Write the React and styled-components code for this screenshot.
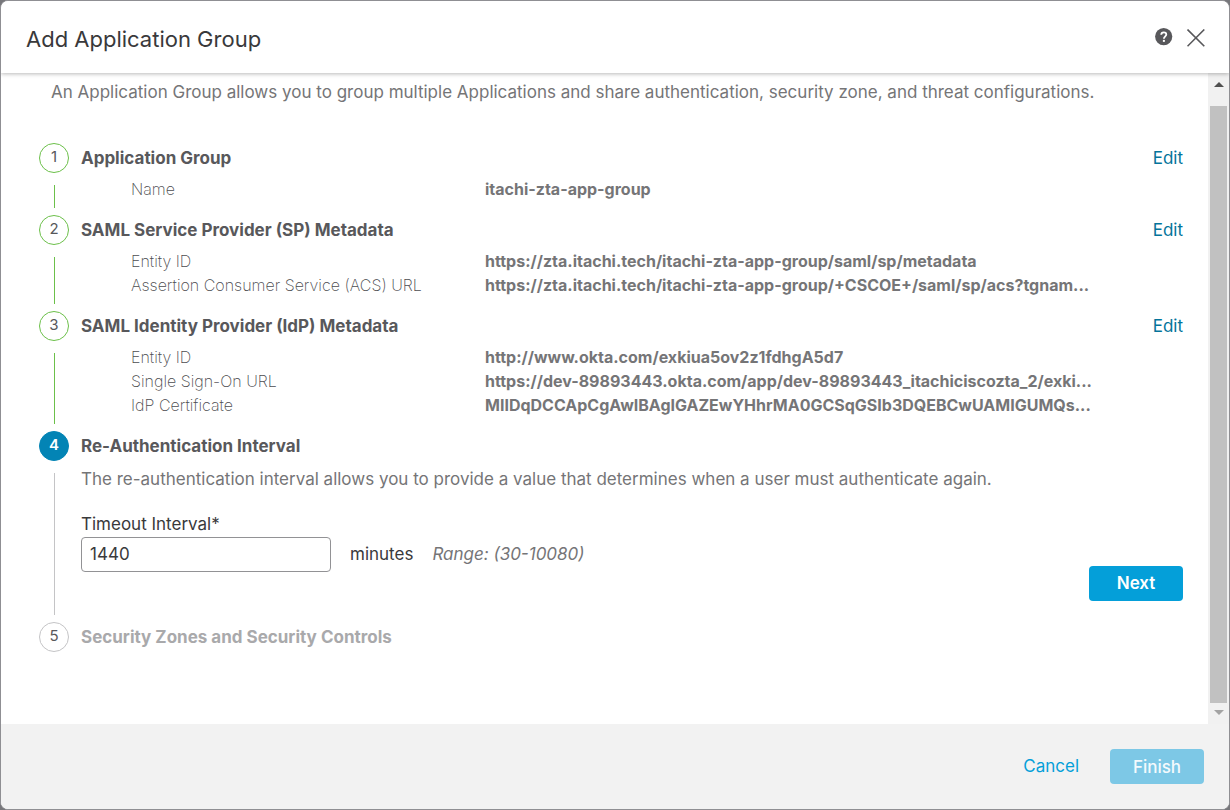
import React from "react";
import styled, { createGlobalStyle, css } from "styled-components";

const GlobalStyle = createGlobalStyle`
  *, *::before, *::after { box-sizing: border-box; }
  html { background: #77777b; }
  body {
    margin: 0;
    font-family: Inter, "Liberation Sans", sans-serif;
    font-size: 17px;
    line-height: 24px;
    color: #39393b;
  }
  h1, h2, p, dl, dt, dd, ol { margin: 0; padding: 0; }
  button, input { font: inherit; }
`;

const Dialog = styled.section`
  display: flex;
  flex-direction: column;
  min-height: 100vh;
  overflow: hidden;
  background: #fff;
  border: 1px solid #8f8f93;
  border-radius: 8px;
`;

const Header = styled.header`
  position: relative;
  display: flex;
  align-items: center;
  justify-content: space-between;
  height: 72px;
  padding: 2px 24px 0 25px;
  background: #fff;
  box-shadow: 0 1px 4px rgba(0, 0, 0, 0.28);
`;

const Title = styled.h1`
  padding-top: 2px;
  font-size: 22px;
  line-height: 28px;
  font-weight: 400;
`;

const HeaderActions = styled.div`
  display: flex;
  align-items: center;
  gap: 14px;
`;

const IconButton = styled.button`
  display: flex;
  padding: 0;
  border: 0;
  background: none;
  color: #58585b;
  cursor: pointer;
`;

const Body = styled.div`
  display: flex;
  flex: 1;
`;

const Content = styled.main`
  flex: 1;
  min-width: 0;
  padding: 7px 25px 0 38px;
`;

const Intro = styled.p`
  padding: 0 12px 39px;
  color: #757577;
`;

const Scrollbar = styled.div`
  display: flex;
  flex-direction: column;
  width: 21px;
  padding: 0 2px;
  background: #f1f1f1;
`;

const ScrollArrow = styled.div`
  display: flex;
  justify-content: center;
  height: ${(p) => (p.$down ? 21 : 33)}px;
  padding-top: ${(p) => (p.$down ? 7 : 9)}px;
`;

const ScrollThumb = styled.div`
  flex: 1;
  background: #c1c1c1;
`;

const Steps = styled.ol`
  list-style: none;
`;

const Step = styled.li`
  display: flex;
  gap: 12px;
`;

const Rail = styled.div`
  display: flex;
  flex-direction: column;
  align-items: center;
  flex: none;
  width: 30px;
`;

const tones = {
  done: css`
    border-color: #6cc04a;
    color: #58585b;
  `,
  active: css`
    border-color: #0384b5;
    background: #0384b5;
    color: #fff;
    font-weight: 600;
  `,
  pending: css`
    border-color: #c4c4c6;
    color: #58585b;
  `,
};

const Marker = styled.span`
  width: 30px;
  height: 30px;
  border: 1px solid;
  border-radius: 50%;
  font-size: 15px;
  line-height: 26px;
  text-align: center;
  ${(p) => tones[p.$tone]}
`;

const Connector = styled.span`
  flex: 1;
  width: 1px;
  margin: 12px 0 7px;
  background: ${(p) => (p.$tone === "done" ? "#6cc04a" : "#c4c4c6")};
`;

const StepContent = styled.div`
  flex: 1;
  min-width: 0;
`;

const StepHead = styled.div`
  display: flex;
  align-items: center;
  justify-content: space-between;
  height: 30px;
`;

const StepTitle = styled.h2`
  font-size: 17px;
  line-height: 24px;
  font-weight: 700;
  color: ${(p) => (p.$tone === "pending" ? "#a9a9ab" : "#58585b")};
`;

const EditLink = styled.a`
  color: #04749b;
  text-decoration: none;
`;

const Details = styled.dl`
  padding: 4px 0 14px 50px;
  font-size: 16px;
`;

const Detail = styled.div`
  display: grid;
  grid-template-columns: 354px minmax(0, 1fr);
`;

const DetailName = styled.dt`
  font-weight: 200;
  color: #4c4c4f;
`;

const DetailValue = styled.dd`
  overflow: hidden;
  font-weight: 700;
  color: #757577;
  white-space: nowrap;
  text-overflow: ellipsis;
`;

const Description = styled.p`
  padding: 6px 0 21px;
  color: #757577;
`;

const FieldLabel = styled.label`
  display: block;
  padding: 2px 0 3px;
  line-height: 20px;
`;

const FormRow = styled.div`
  display: flex;
  justify-content: space-between;
  min-height: 64px;
  margin-bottom: 21px;
`;

const Field = styled.div`
  display: flex;
  align-items: center;
  align-self: flex-start;
  gap: 19px;
`;

const TextInput = styled.input`
  width: 250px;
  height: 35px;
  padding: 0 8px 1px;
  border: 1px solid #929295;
  border-radius: 4px;
  background: #fff;
  color: #39393b;
`;

const Unit = styled.span`
  padding-bottom: 1px;
`;

const Hint = styled.em`
  padding-bottom: 1px;
  color: #757577;
`;

const Button = styled.button`
  align-self: flex-end;
  width: 94px;
  height: 35px;
  padding: 0 0 1px;
  border: 0;
  border-radius: 4px;
  background: #049fd9;
  color: #fff;
  font-weight: 600;
  cursor: pointer;

  &:disabled {
    padding-bottom: 0;
    background: #7dc8e6;
    color: #f4fafd;
    font-weight: 500;
    cursor: default;
  }
`;

const Footer = styled.footer`
  display: flex;
  align-items: center;
  justify-content: flex-end;
  gap: 31px;
  padding: 25px;
  background: #f2f2f2;
`;

const TextButton = styled.button`
  padding: 0 0 1px;
  border: 0;
  background: none;
  color: #049fd9;
  cursor: pointer;
`;

const HelpIcon = () => (
  <svg width="18" height="20" viewBox="0 0 18 20" aria-hidden="true">
    <circle cx="8.7" cy="8.6" r="8.6" fill="currentColor" />
    <path
      d="M6.2 6.8C6.2 5.1 7.3 4.3 8.8 4.3s2.5.9 2.5 2.2c0 1.8-2.4 1.9-2.4 4.2"
      fill="none"
      stroke="#fff"
      strokeWidth="1.8"
    />
    <circle cx="8.9" cy="12.9" r="1.15" fill="#fff" />
  </svg>
);

const CloseIcon = () => (
  <svg width="18" height="18" viewBox="0 0 18 18" aria-hidden="true">
    <path d="M.5.5l16.8 16.8M17.3.5L.5 17.3" stroke="currentColor" strokeWidth="1.6" />
  </svg>
);

const ArrowGlyph = ({ down }) => (
  <svg width="10" height="5" viewBox="0 0 10 5" aria-hidden="true">
    <path d={down ? "M0 0h10L5 5z" : "M5 0l5 5H0z"} fill={down ? "#a3a3a3" : "#505050"} />
  </svg>
);

const completed = [
  {
    title: "Application Group",
    rows: [["Name", "itachi-zta-app-group"]],
  },
  {
    title: "SAML Service Provider (SP) Metadata",
    rows: [
      ["Entity ID", "https://zta.itachi.tech/itachi-zta-app-group/saml/sp/metadata"],
      [
        "Assertion Consumer Service (ACS) URL",
        "https://zta.itachi.tech/itachi-zta-app-group/+CSCOE+/saml/sp/acs?tgnam...",
      ],
    ],
  },
  {
    title: "SAML Identity Provider (IdP) Metadata",
    rows: [
      ["Entity ID", "http://www.okta.com/exkiua5ov2z1fdhgA5d7"],
      [
        "Single Sign-On URL",
        "https://dev-89893443.okta.com/app/dev-89893443_itachiciscozta_2/exki...",
      ],
      ["IdP Certificate", "MIIDqDCCApCgAwIBAgIGAZEwYHhrMA0GCSqGSIb3DQEBCwUAMIGUMQs..."],
    ],
  },
];

function WizardStep({ number, tone, title, editable, last, children }) {
  return (
    <Step>
      <Rail>
        <Marker $tone={tone}>{number}</Marker>
        {!last && <Connector $tone={tone} />}
      </Rail>
      <StepContent>
        <StepHead>
          <StepTitle $tone={tone}>{title}</StepTitle>
          {editable && (
            <EditLink href="#" aria-label={`Edit ${title}`}>
              Edit
            </EditLink>
          )}
        </StepHead>
        {children}
      </StepContent>
    </Step>
  );
}

export default function App() {
  return (
    <>
      <GlobalStyle />
      <Dialog role="dialog" aria-labelledby="dialog-title">
        <Header>
          <Title id="dialog-title">Add Application Group</Title>
          <HeaderActions>
            <IconButton type="button" aria-label="Help">
              <HelpIcon />
            </IconButton>
            <IconButton type="button" aria-label="Close">
              <CloseIcon />
            </IconButton>
          </HeaderActions>
        </Header>
        <Body>
          <Content>
            <Intro>
              An Application Group allows you to group multiple Applications and share
              authentication, security zone, and threat configurations.
            </Intro>
            <Steps>
              {completed.map((step, i) => (
                <WizardStep key={step.title} number={i + 1} tone="done" title={step.title} editable>
                  <Details>
                    {step.rows.map(([name, value]) => (
                      <Detail key={name}>
                        <DetailName>{name}</DetailName>
                        <DetailValue>{value}</DetailValue>
                      </Detail>
                    ))}
                  </Details>
                </WizardStep>
              ))}
              <WizardStep number={4} tone="active" title="Re-Authentication Interval">
                <Description>
                  The re-authentication interval allows you to provide a value that determines
                  when a user must authenticate again.
                </Description>
                <FieldLabel htmlFor="timeout">Timeout Interval*</FieldLabel>
                <FormRow>
                  <Field>
                    <TextInput id="timeout" type="text" defaultValue="1440" />
                    <Unit>minutes</Unit>
                    <Hint>Range: (30-10080)</Hint>
                  </Field>
                  <Button type="button">Next</Button>
                </FormRow>
              </WizardStep>
              <WizardStep
                number={5}
                tone="pending"
                title="Security Zones and Security Controls"
                last
              />
            </Steps>
          </Content>
          <Scrollbar aria-hidden="true">
            <ScrollArrow>
              <ArrowGlyph />
            </ScrollArrow>
            <ScrollThumb />
            <ScrollArrow $down>
              <ArrowGlyph down />
            </ScrollArrow>
          </Scrollbar>
        </Body>
        <Footer>
          <TextButton type="button">Cancel</TextButton>
          <Button type="button" disabled>
            Finish
          </Button>
        </Footer>
      </Dialog>
    </>
  );
}
